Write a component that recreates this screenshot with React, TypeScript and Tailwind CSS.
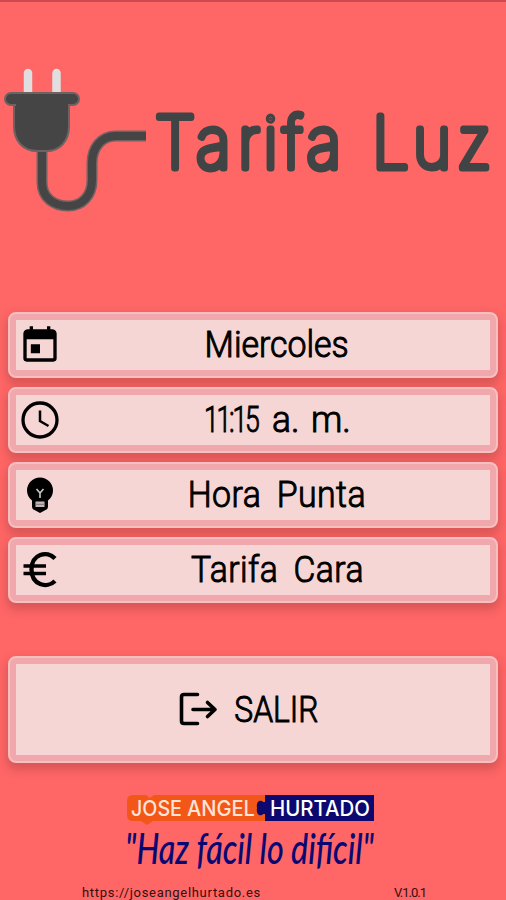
import type { ReactNode } from "react";

const sans = "font-['Roboto','Liberation_Sans',sans-serif]";

function PlugLogo() {
  return (
    <svg width="506" height="160" viewBox="0 60 506 160" className="block" role="img" aria-label="Tarifa Luz">
      <g fill="none" strokeLinejoin="round">
        <path d="M28 73V96M56.500 73V96" stroke="#e0dede" strokeWidth="8.500" strokeLinecap="round" />
        <path d="M42 150V182C42 198 54 206 68 206S92 196 92 180V163C92 148 101 136 116 136H146" stroke="#746263" strokeWidth="11" />
        <path d="M42 150V182C42 198 54 206 68 206S92 196 92 180V163C92 148 101 136 116 136H146" stroke="#454545" strokeWidth="8" />
      </g>
      <path d="M14 101H69V126C69 142 59 151 47 151H37C24 151 14 142 14 126Z" fill="#454545" stroke="#6e6263" strokeWidth="2" />
      <rect x="5" y="93" width="74" height="12" rx="6" fill="#454545" stroke="#6e6263" strokeWidth="2" />
      <rect x="16" y="98" width="52" height="10" fill="#454545" />
      <text
        transform="translate(1.500 0.500) scale(0.92 1)"
        x="188.600 230.400 269 292.400 316.300 350.500 380 423 467.900 513.600"
        y="167.500"
        textAnchor="middle"
        fontFamily="Inter, Roboto, sans-serif"
        fontWeight="100"
        fontSize="71"
        fill="#414444"
        stroke="#414444"
        strokeWidth="7"
        strokeLinejoin="round"
        strokeLinecap="round"
      >
        Tarifa Luz
      </text>
    </svg>
  );
}

function CalendarIcon() {
  return (
    <svg width="40" height="40" viewBox="0 0 24 24" fill="black">
      <path d="M19 2.500h-.800V.800h-2v1.700H7.800V.800h-2v1.700H5a3 3 0 0 0-3 2.500v15a2 2 0 0 0 2 2h16a2 2 0 0 0 2-2V5a3 3 0 0 0-3-2.500Zm1 17.500H4V8.500h16ZM6.500 11.500h5.500v5.500H6.500Z" fillRule="evenodd" />
    </svg>
  );
}

function ClockIcon() {
  return (
    <svg width="40" height="40" viewBox="0 0 40 40" fill="none" stroke="black">
      <circle cx="20" cy="20" r="17" strokeWidth="3.300" />
      <path d="M20 10.500V21L28.500 26" strokeWidth="2.500" />
    </svg>
  );
}

function BulbIcon() {
  return (
    <svg width="40" height="40" viewBox="0 0 40 40">
      <path d="M20 2.500A13 13 0 0 0 7 15.500C7 20 9 23 12 25.500V32Q12 34 14.500 35L20 38L25.500 35Q28 34 28 32V25.500C31 23 33 20 33 15.500A13 13 0 0 0 20 2.500Z" fill="black" />
      <path d="M16.500 14L20 18L23.500 14M20 17.500V23" fill="none" stroke="#cfc6c6" strokeWidth="1.600" />
      <path d="M15.500 26.500H24.500V32H15.500Z" fill="#c8b7b7" />
      <path d="M15.500 29.300H24.500" stroke="#777" strokeWidth="1" />
    </svg>
  );
}

function EuroIcon() {
  return (
    <svg width="40" height="40" viewBox="0 0 40 40" fill="none" stroke="black">
      <path d="M35 8.500C27 0 11.500 4 11.500 19.500S27 39 35 31" strokeWidth="4.300" />
      <path d="M3.500 16H26M3.500 23.500H26" strokeWidth="3.700" />
    </svg>
  );
}

const cardLook =
  "box-border rounded-[8px] border-2 border-[#f7bfc0] bg-[#f0a8ac] p-[6px] shadow-[0_5px_9px_2px_rgba(150,60,60,0.34)]";

function Row({ icon, children, stretch }: { icon: ReactNode; children: ReactNode; stretch: string }) {
  return (
    <div className={`h-[66px] ${cardLook}`}>
      <div className="flex h-full items-center bg-[#f6d6d5] pl-1">
        {icon}
        <div className="flex flex-1 justify-center pl-1">
          <span className={`whitespace-pre text-[36px] font-light leading-[50px] text-black [-webkit-text-stroke:1px_black] ${stretch}`}>{children}</span>
        </div>
      </div>
    </div>
  );
}

function Brand() {
  return (
    <svg width="256" height="88" viewBox="122 790 256 88" className="block overflow-visible">
      <path d="M133 795H146L150 798L154 795H265V821H153L147 825L141 821H133Q127 821 127 815V801Q127 795 133 795Z" fill="#f25718" />
      <path d="M265 795H374V821H265V814H263Q262 816 259 815Q256 813 257 808Q256 803 259 801Q262 800 263 802H265Z" fill="#0c0870" />
      <g fontFamily="Inter, sans-serif" fontSize="21" fontWeight="500" fill="#ffe3d6">
        <text x="131" y="815.500" textLength="51" lengthAdjust="spacingAndGlyphs">JOSE</text>
        <text x="187" y="815.500" textLength="68" lengthAdjust="spacingAndGlyphs">ANGEL</text>
        <text x="270" y="815.500" textLength="100" lengthAdjust="spacingAndGlyphs" fill="white">HURTADO</text>
      </g>
      <text x="125" y="864" fontFamily="Lato, sans-serif" fontStyle="italic" fontWeight="500" fontSize="43" textLength="249" lengthAdjust="spacingAndGlyphs" fill="#090773">
        "Haz fácil lo difícil"
      </text>
    </svg>
  );
}

export default function App() {
  return (
    <main className={`flex h-[900px] w-[506px] flex-col overflow-hidden border-t-2 border-[#cd4a4e] bg-[#ff6666] ${sans}`}>
      <header className="h-[310px] shrink-0 pt-[58px]">
        <PlugLogo />
      </header>
      <section className="flex shrink-0 flex-col gap-[9px] px-2">
        <Row icon={<CalendarIcon />} stretch="block scale-x-[0.94]">Miercoles</Row>
        <Row icon={<ClockIcon />} stretch="flex w-[147px]">
          <span className="w-[68px] origin-left scale-x-[0.74] tracking-[-3px]">11:15 </span>
          <span className="w-[39px] origin-left scale-x-[0.98]">a. </span>
          <span className="w-[40px] origin-left scale-x-[0.98]">m.</span>
        </Row>
        <Row icon={<BulbIcon />} stretch="block scale-x-[0.94] tracking-[0.5px] [word-spacing:7px]">Hora Punta</Row>
        <Row icon={<EuroIcon />} stretch="block scale-x-[0.935] tracking-[0.5px] [word-spacing:7px]">Tarifa Cara</Row>
      </section>
      <div className="shrink-0 px-2 pt-[53px]">
        <button className={`block h-[107px] w-full ${cardLook}`}>
          <span className="flex h-full items-center bg-[#f6d6d5] pl-[162px]">
            <svg width="40" height="40" viewBox="0 0 40 40" fill="none" stroke="black" strokeWidth="3.600" strokeLinecap="round" strokeLinejoin="round">
              <path d="M19.500 4.500H6Q3.500 4.500 3.500 7V31Q3.500 33.500 6 33.500H19.500" />
              <path d="M15 19.500H37M29.500 12.500L37 19.500L29.500 26.500" />
            </svg>
            <span className="block origin-left scale-x-[0.86] pl-[19px] text-[37px] font-light leading-[50px] text-black [-webkit-text-stroke:1px_black]">SALIR</span>
          </span>
        </button>
      </div>
      <footer className="flex shrink-0 flex-col pt-[27px]">
        <div className="pl-[122px]"><Brand /></div>
        <div className="flex pl-[82px] pt-[7px] text-[13px] leading-[16px] text-[#321010]">
          <span className="w-[312px] tracking-[0.7px]">https://joseangelhurtado.es</span>
          <span className="tracking-[-1px]">V.1.0.1</span>
        </div>
      </footer>
    </main>
  );
}
